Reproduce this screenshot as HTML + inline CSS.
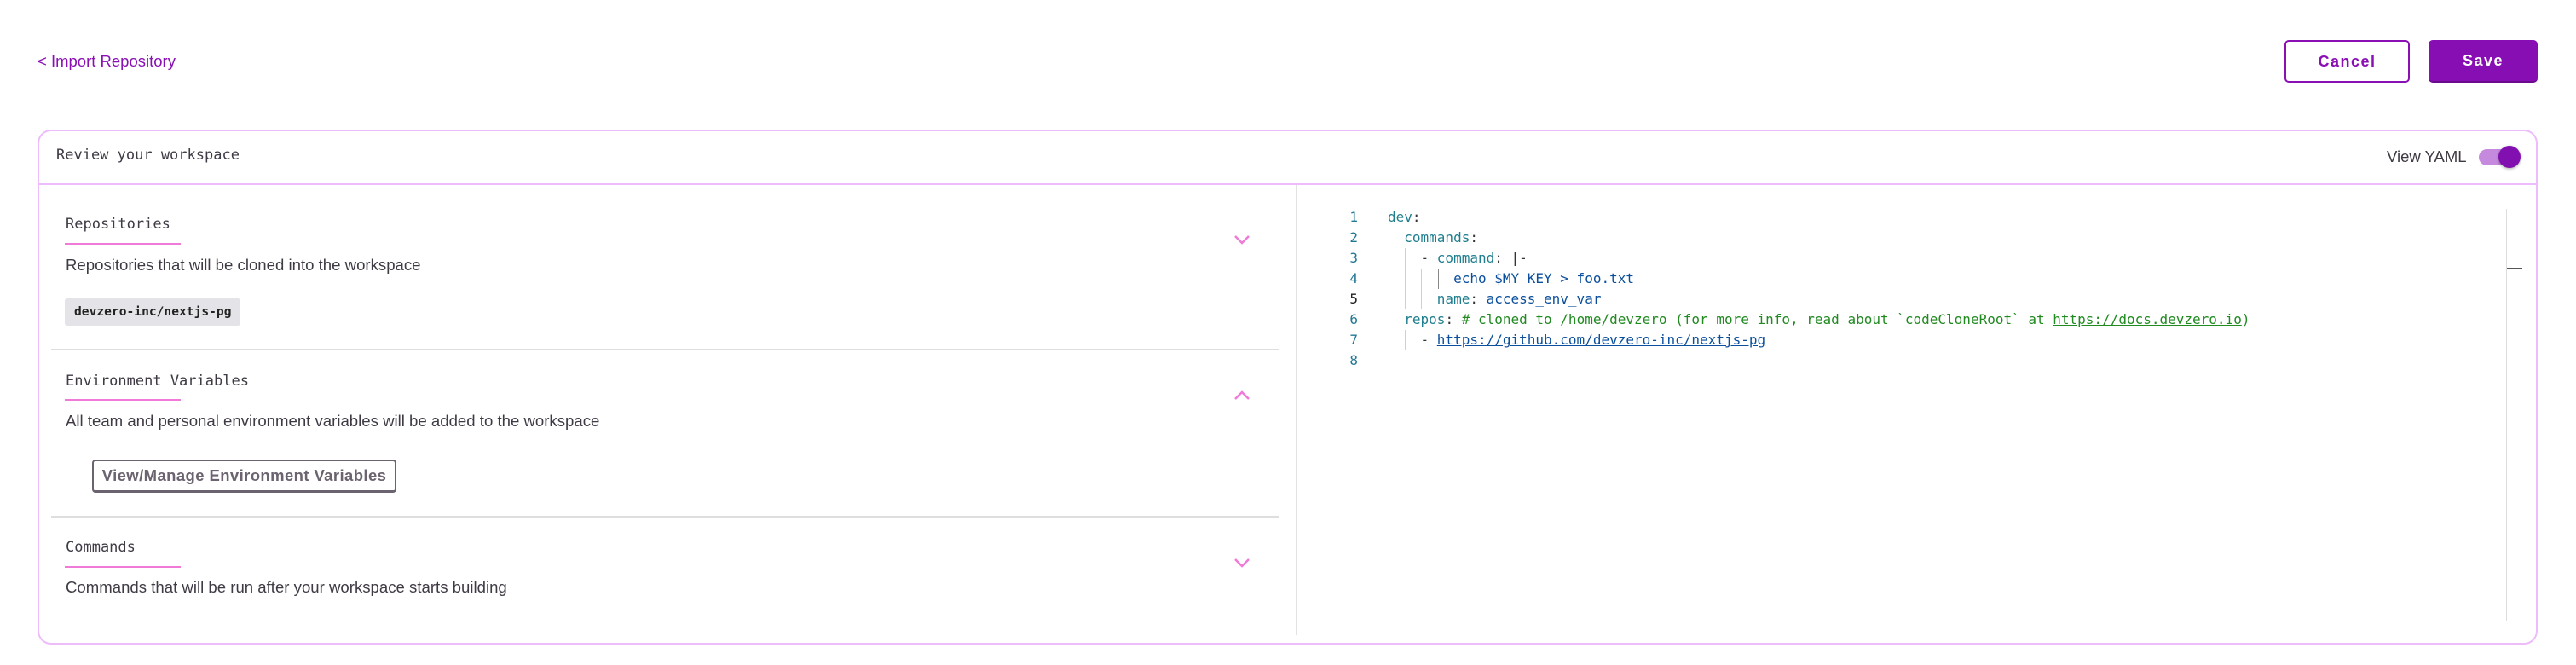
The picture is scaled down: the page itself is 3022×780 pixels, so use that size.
<!DOCTYPE html>
<html><head><meta charset="utf-8"><style>
*{margin:0;padding:0;box-sizing:border-box}
body{width:3022px;height:780px;background:#fff;position:relative;overflow:hidden;font-family:"Liberation Sans",sans-serif;color:#3f3a44}
.a{position:absolute;white-space:nowrap}
.mono{font-family:"DejaVu Sans Mono","Liberation Mono",monospace}
.t{font-size:17px;color:#3f3a44;line-height:20px}
.ul{position:absolute;height:2px;background:#f07ad8;width:136px;left:76px}
.d{font-size:18.6px;color:#3f3a44;line-height:22px}
.hr{position:absolute;left:60px;width:1440px;height:2px;background:#dedede}
.code{font-size:16px;line-height:24px}
.ln{color:#237893;width:40px;text-align:right;left:1553px}
.k{color:#1e7e8e}.v{color:#0b4f9c}.c{color:#218a21}.p{color:#333}
.g{position:absolute;width:1px;background:#d0d0d0}
</style></head><body>
<div class="a" style="left:44px;top:61px;font-size:18.5px;color:#8a10b4">&lt; Import Repository</div>
<div class="a" style="left:2680px;top:47px;width:147px;height:50px;border:2px solid #8a10b4;border-radius:5px;color:#8a10b4;font-weight:bold;font-size:18px;letter-spacing:1.5px;text-align:center;line-height:46px">Cancel</div>
<div class="a" style="left:2849px;top:47px;width:128px;height:50px;background:#860eb2;border-radius:5px;border-bottom:2px solid #6a0a8c;color:#fff;font-weight:bold;font-size:18px;letter-spacing:1.5px;text-align:center;line-height:48px">Save</div>

<div class="a" style="left:44px;top:152px;width:2933px;height:604px;border:2px solid #eebcfb;border-radius:16px"></div>
<div class="a" style="left:46px;top:215px;width:2929px;height:2px;background:#eebcfb"></div>
<div class="a mono" style="left:66px;top:172px;font-size:17px;color:#3f3a44">Review your workspace</div>
<div class="a" style="left:2800px;top:173px;font-size:18.5px;color:#3f3a44">View YAML</div>
<div class="a" style="left:2908px;top:175px;width:42px;height:19px;border-radius:10px;background:#c58ade"></div>
<div class="a" style="left:2931px;top:171px;width:26px;height:26px;border-radius:50%;background:#820fb0;box-shadow:0 1px 3px rgba(0,0,0,.35)"></div>

<div class="a" style="left:1520px;top:217px;width:2px;height:528px;background:#e2e2e2"></div>

<div class="a mono t" style="left:77px;top:253px">Repositories</div>
<div class="ul" style="top:285px"></div>
<div class="a d" style="left:77px;top:300px">Repositories that will be cloned into the workspace</div>
<div class="a mono" style="left:76px;top:350px;width:206px;height:32px;background:#e4e4e8;border-radius:3px;font-size:14.6px;font-weight:bold;color:#222;line-height:32px;padding-left:11px">devzero-inc/nextjs-pg</div>
<svg class="a" style="left:1447px;top:275px" width="20" height="12"><path d="M2 2 L10 10 L18 2" fill="none" stroke="#f07ad8" stroke-width="2.5"/></svg>
<div class="hr" style="top:409px"></div>

<div class="a mono t" style="left:77px;top:437px">Environment Variables</div>
<div class="ul" style="top:468px"></div>
<div class="a d" style="left:77px;top:483px">All team and personal environment variables will be added to the workspace</div>
<svg class="a" style="left:1447px;top:458px" width="20" height="12"><path d="M2 10 L10 2 L18 10" fill="none" stroke="#f07ad8" stroke-width="2.5"/></svg>
<div class="a" style="left:108px;top:539px;width:357px;height:39px;border:2px solid #6b6370;border-bottom-width:3px;border-radius:4px;color:#6b6370;font-size:18.5px;font-weight:bold;letter-spacing:0.4px;line-height:34px;text-align:center">View/Manage Environment Variables</div>
<div class="hr" style="top:605px"></div>

<div class="a mono t" style="left:77px;top:632px">Commands</div>
<div class="ul" style="top:664px"></div>
<div class="a d" style="left:77px;top:678px">Commands that will be run after your workspace starts building</div>
<svg class="a" style="left:1447px;top:654px" width="20" height="12"><path d="M2 2 L10 10 L18 2" fill="none" stroke="#f07ad8" stroke-width="2.5"/></svg>

<!-- code -->
<div class="a code mono ln" style="top:243px">1<br>2<br>3<br>4<br><span style="color:#222">5</span><br>6<br>7<br>8</div>
<div class="g" style="left:1629px;top:267px;height:144px"></div>
<div class="g" style="left:1648px;top:291px;height:72px"></div>
<div class="g" style="left:1648px;top:387px;height:24px"></div>
<div class="g" style="left:1667px;top:315px;height:48px"></div>
<div class="g" style="left:1687px;top:315px;height:24px;background:#888"></div>
<div class="a code mono" style="left:1628px;top:243px;color:#333">
<span class="k">dev</span>:<br>
&nbsp;&nbsp;<span class="k">commands</span>:<br>
&nbsp;&nbsp;&nbsp;&nbsp;- <span class="k">command</span>: |-<br>
&nbsp;&nbsp;&nbsp;&nbsp;&nbsp;&nbsp;&nbsp;&nbsp;<span class="v">echo $MY_KEY &gt; foo.txt</span><br>
&nbsp;&nbsp;&nbsp;&nbsp;&nbsp;&nbsp;<span class="k">name</span>: <span class="v">access_env_var</span><br>
&nbsp;&nbsp;<span class="k">repos</span>: <span class="c"># cloned to /home/devzero (for more info, read about `codeCloneRoot` at <u>https://docs.devzero.io</u>)</span><br>
&nbsp;&nbsp;&nbsp;&nbsp;- <span class="v"><u>https://github.com/devzero-inc/nextjs-pg</u></span><br>
&nbsp;</div>
<div class="a" style="left:2940px;top:245px;width:1px;height:483px;background:#ddd"></div>
<div class="a" style="left:2941px;top:314px;width:18px;height:2px;background:#555"></div>
</body></html>
